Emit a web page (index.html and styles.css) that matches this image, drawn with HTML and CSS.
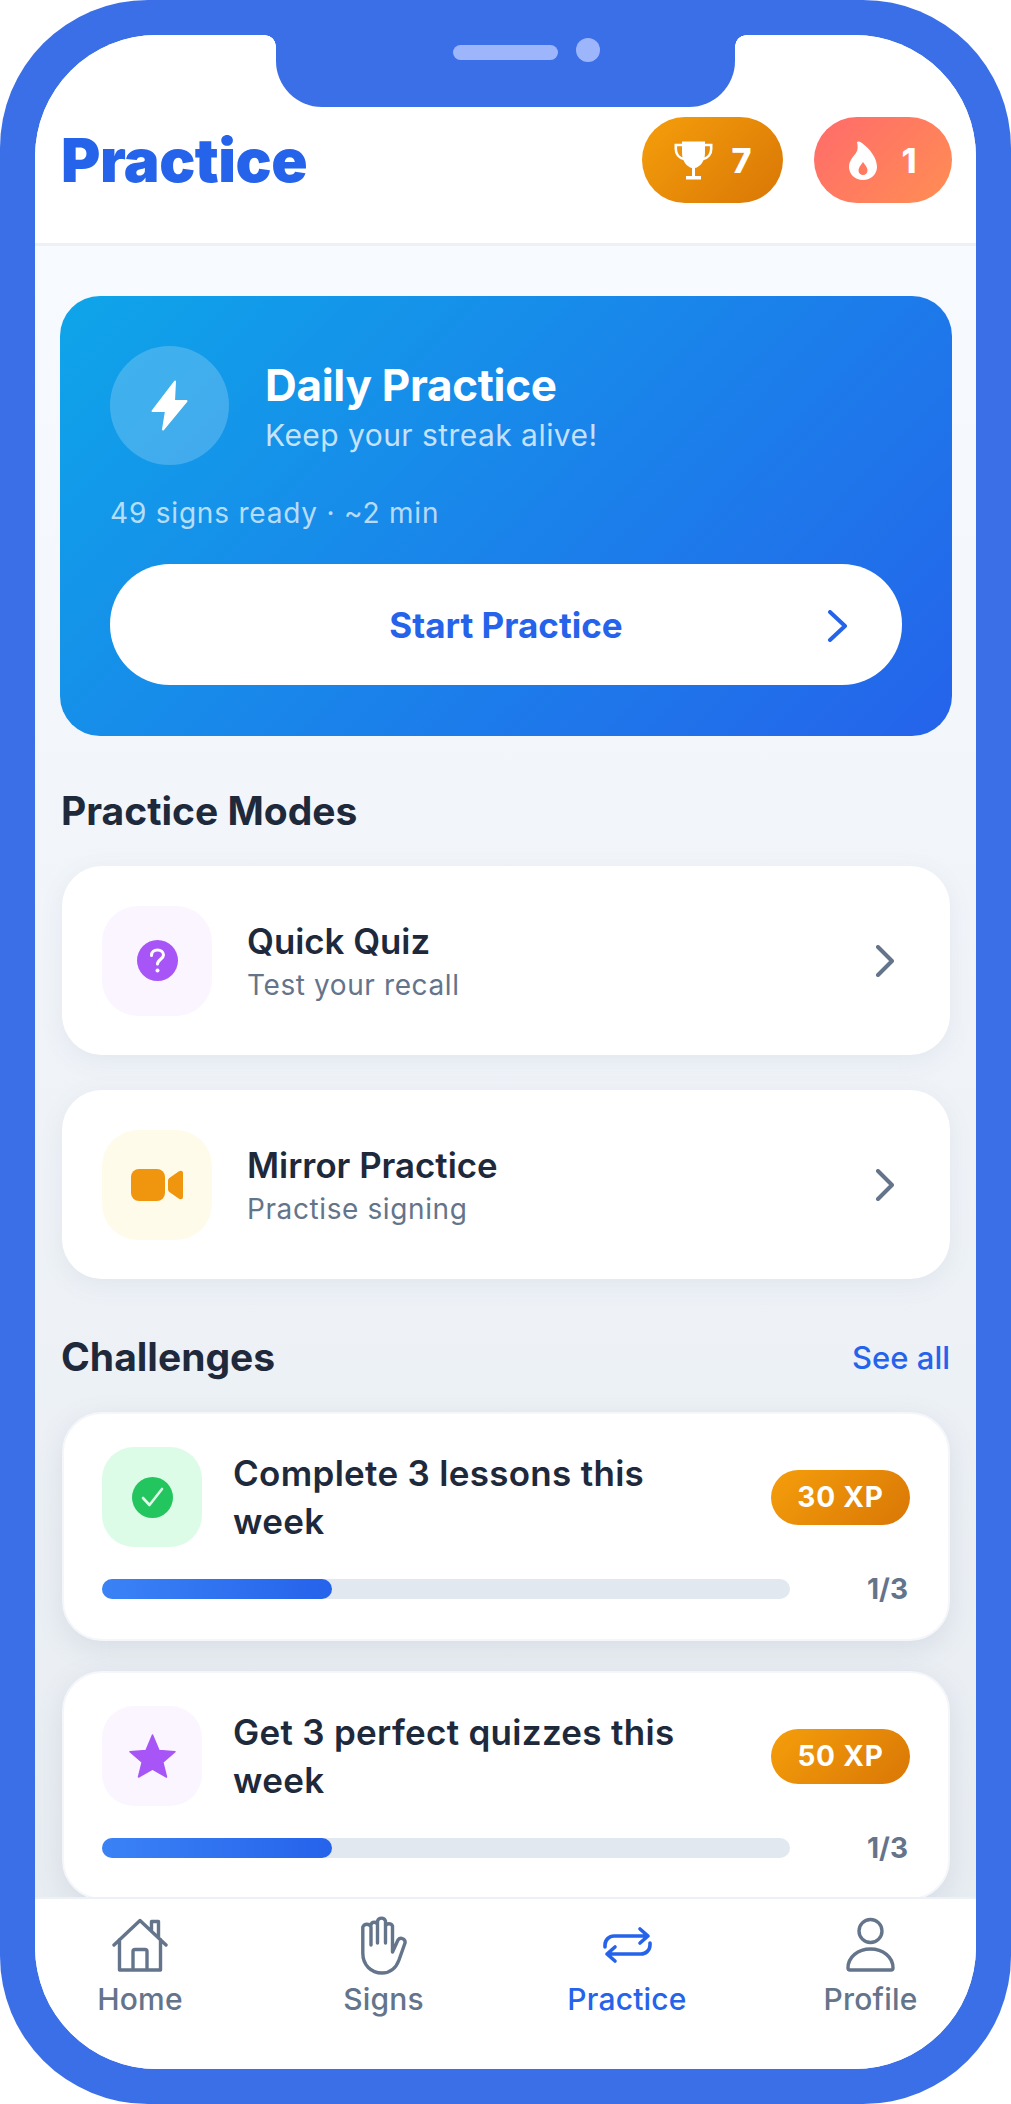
FILE: index.html
```html
<!DOCTYPE html>
<html lang="en">

<head>
    <meta charset="UTF-8" />
    <meta name="viewport" content="width=device-width, initial-scale=1.0" />
    <title>Practice</title>
    <link rel="stylesheet" href="styles.css">
</head>

<body>
    <div class="phone">
        <div class="notch">
            <span class="speaker"></span>
            <span class="camera"></span>
        </div>

        <div class="screen">
            <header class="top-bar">
                <h1 class="page-title">Practice</h1>
                <div class="pills">
                    <div class="pill pill-trophy">
                        <svg class="pill-icon" width="39" height="39" viewBox="0 0 39 39">
                            <path fill="#fff" d="M8 0.5H31V12C31 20 26 26 21 27V35H27V38.5H12V35H18V27C13 26 8 20 8 12Z" />
                            <path fill="none" stroke="#fff" stroke-width="2.6" d="M8 4H1.8V8C1.8 13 5 17 10 18M31 4H37.2V8C37.2 13 34 17 29 18" />
                        </svg>
                        <span>7</span>
                    </div>
                    <div class="pill pill-flame">
                        <svg class="pill-icon" width="28" height="39" viewBox="0 0 28 39">
                            <path fill="#fff" fill-rule="evenodd" d="M8 1C9 0 11 0.5 13 2C21 8 28 17 28 26C28 33 22 39 14 39C6 39 0 33 0 26C0 20 4 16 7 12C9 9 9 5 8 1ZM14 21C11 25 9.5 27 9.5 29.5A4.5 4.5 0 0 0 18.5 29.5C18.5 27 17 25 14 21Z" />
                        </svg>
                        <span>1</span>
                    </div>
                </div>
            </header>

            <main class="content">
                <section class="hero">
                    <div class="hero-top">
                        <div class="hero-icon">
                            <svg width="37" height="51" viewBox="0 0 37 51">
                                <path fill="#fff" stroke="#fff" stroke-width="2" stroke-linejoin="round" d="M24 1.5L1.5 31H15L12 49.5L35.5 21H23Z" />
                            </svg>
                        </div>
                        <div class="hero-text">
                            <div class="hero-title">Daily Practice</div>
                            <div class="hero-sub">Keep your streak alive!</div>
                        </div>
                    </div>
                    <div class="hero-meta">49 signs ready · ~2 min</div>
                    <a class="start-btn" href="#">
                        <span>Start Practice</span>
                        <svg class="start-chevron" width="21" height="32" viewBox="0 0 21 32">
                            <path fill="none" stroke="#2563eb" stroke-width="4" stroke-linecap="round" stroke-linejoin="round" d="M3 2L18 16L3 30" />
                        </svg>
                    </a>
                </section>

                <h2 class="section-title modes-title">Practice Modes</h2>

                <a class="mode-card" href="#">
                    <div class="mode-icon tint-purple">
                        <svg width="41" height="41" viewBox="0 0 41 41">
                            <circle cx="20.5" cy="20.5" r="20.5" fill="#a855f7" />
                            <path fill="none" stroke="#fff" stroke-width="3" stroke-linecap="round" d="M14.5 15.5C14.5 12 17 10 20.5 10C24 10 26.5 12 26.5 15C26.5 19 20.5 19.5 20.5 24" />
                            <circle cx="20.5" cy="30.5" r="2" fill="#fff" />
                        </svg>
                    </div>
                    <div class="mode-text">
                        <div class="mode-name">Quick Quiz</div>
                        <div class="mode-sub">Test your recall</div>
                    </div>
                    <svg class="mode-chevron" width="19" height="32" viewBox="0 0 19 32">
                        <path fill="none" stroke="#64748b" stroke-width="4" stroke-linecap="round" stroke-linejoin="round" d="M3 2L17 16L3 30" />
                    </svg>
                </a>

                <a class="mode-card" href="#">
                    <div class="mode-icon tint-yellow">
                        <svg width="52" height="32" viewBox="0 0 52 32">
                            <rect width="34" height="32" rx="8" fill="#f0960e" />
                            <path fill="#f0960e" d="M37 12C37 10.5 37.6 9.5 39 8.6L48 2.3C50 1 52 2 52 4V28C52 30 50 31 48 29.7L39 23.4C37.6 22.5 37 21.5 37 20Z" />
                        </svg>
                    </div>
                    <div class="mode-text">
                        <div class="mode-name">Mirror Practice</div>
                        <div class="mode-sub">Practise signing</div>
                    </div>
                    <svg class="mode-chevron" width="19" height="32" viewBox="0 0 19 32">
                        <path fill="none" stroke="#64748b" stroke-width="4" stroke-linecap="round" stroke-linejoin="round" d="M3 2L17 16L3 30" />
                    </svg>
                </a>

                <div class="section-row">
                    <h2 class="section-title">Challenges</h2>
                    <a class="see-all" href="#">See all</a>
                </div>

                <div class="challenge">
                    <div class="challenge-top">
                        <div class="challenge-icon tint-green">
                            <svg width="41" height="41" viewBox="0 0 41 41">
                                <circle cx="20.5" cy="20.5" r="20.5" fill="#22c55e" />
                                <path fill="none" stroke="#dcfce7" stroke-width="2.6" stroke-linecap="round" stroke-linejoin="round" d="M11 21L17.5 28L30 12" />
                            </svg>
                        </div>
                        <div class="challenge-name">Complete 3 lessons this week</div>
                        <div class="xp">30 XP</div>
                    </div>
                    <div class="progress-row">
                        <div class="track"><div class="fill" style="width: 33.4%"></div></div>
                        <div class="count">1/3</div>
                    </div>
                </div>

                <div class="challenge">
                    <div class="challenge-top">
                        <div class="challenge-icon tint-purple">
                            <svg width="47" height="44" viewBox="0 0 47 44">
                                <path fill="#a855f7" stroke="#a855f7" stroke-width="1.5" stroke-linejoin="round" d="M23.5 1L30 16.5L46 17.8L33.8 28.2L37.5 43L23.5 35.2L9.5 43L13.2 28.2L1 17.8L17 16.5Z" />
                            </svg>
                        </div>
                        <div class="challenge-name">Get 3 perfect quizzes this week</div>
                        <div class="xp">50 XP</div>
                    </div>
                    <div class="progress-row">
                        <div class="track"><div class="fill" style="width: 33.4%"></div></div>
                        <div class="count">1/3</div>
                    </div>
                </div>
            </main>

            <nav class="tab-bar">
                <a class="tab" href="#">
                    <svg class="tab-icon" width="56" height="54" viewBox="0 0 56 54">
                        <path fill="none" stroke="currentColor" stroke-width="3.4" stroke-linecap="round" stroke-linejoin="round" d="M2 27L28 2.5L54 27M7.5 21.5V52H48.5V21.5M21 52V33.5C21 32.5 21.8 31.5 23 31.5H33C34.2 31.5 35 32.5 35 33.5V52M39.5 12V3.5H46.5V19" />
                    </svg>
                    <span>Home</span>
                </a>
                <a class="tab" href="#">
                    <svg class="tab-icon" width="46" height="60" viewBox="0 0 46 60">
                        <path fill="none" stroke="currentColor" stroke-width="3.4" stroke-linecap="round" stroke-linejoin="round" d="M10 30V12A4.4 4.4 0 0 0 1.8 12V38C1.8 50 10 58 21 58C30 58 35 53 38 45L44 28A3.9 3.9 0 0 0 37 25L31.5 37V11A3.9 3.9 0 0 0 24.5 11V28V6A4.2 4.2 0 0 0 16.5 6V28V10A3.3 3.3 0 0 0 10 10" />
                    </svg>
                    <span>Signs</span>
                </a>
                <a class="tab tab-active" href="#">
                    <svg class="tab-icon swap-icon" width="49" height="36" viewBox="0 0 49 36">
                        <path fill="none" stroke="currentColor" stroke-width="3.6" stroke-linecap="round" stroke-linejoin="round" d="M2 20V18A9 9 0 0 1 11 9H45M37 2L45 9L37 16M47 16V18A9 9 0 0 1 38 27H4M12 20L4 27L12 34" />
                    </svg>
                    <span>Practice</span>
                </a>
                <a class="tab" href="#">
                    <svg class="tab-icon" width="49" height="54" viewBox="0 0 49 54">
                        <circle cx="24.5" cy="13" r="11.5" fill="none" stroke="currentColor" stroke-width="3.4" />
                        <path fill="none" stroke="currentColor" stroke-width="3.4" stroke-linejoin="round" d="M4 52H45A2 2 0 0 0 47 50C47 39 37 31 24.5 31C12 31 2 39 2 50A2 2 0 0 0 4 52Z" />
                    </svg>
                    <span>Profile</span>
                </a>
            </nav>
        </div>
    </div>
</body>

</html>
```

FILE: styles.css
```css
:root {
    --frame: #3b6fe8;
    --blue: #2563eb;
    --ink: #1e293b;
    --muted: #64748b;
    --line: #e2e8f0;
}

* {
    box-sizing: border-box;
}

html,
body {
    margin: 0;
    background: #fff;
}

body {
    font-family: Inter, "Noto Sans", sans-serif;
    color: var(--ink);
}

a {
    color: inherit;
    text-decoration: none;
}

.phone {
    position: relative;
    width: 1011px;
    height: 2104px;
    padding: 35px;
    border-radius: 148px;
    background: var(--frame);
}

.notch {
    position: absolute;
    top: 35px;
    left: 276px;
    width: 459px;
    height: 72px;
    border-radius: 0 0 46px 46px;
    background: var(--frame);
    z-index: 2;
}

.notch::before,
.notch::after {
    content: "";
    position: absolute;
    top: 0;
    width: 11px;
    height: 11px;
}

.notch::before {
    left: -11px;
    background: radial-gradient(circle at 0 100%, transparent 10.5px, var(--frame) 11px);
}

.notch::after {
    right: -11px;
    background: radial-gradient(circle at 100% 100%, transparent 10.5px, var(--frame) 11px);
}

.speaker {
    position: absolute;
    top: 10px;
    left: 177px;
    width: 105px;
    height: 15px;
    border-radius: 8px;
    background: #9db5fb;
}

.camera {
    position: absolute;
    top: 3px;
    left: 300px;
    width: 24px;
    height: 24px;
    border-radius: 50%;
    background: #9db5fb;
}

.screen {
    display: flex;
    flex-direction: column;
    height: 100%;
    border-radius: 122px;
    background: #fff;
    overflow: hidden;
}

/* header */

.top-bar {
    display: flex;
    align-items: center;
    justify-content: space-between;
    flex: none;
    height: 211px;
    padding: 82px 24px 40px 26px;
    border-bottom: 3px solid #edf1f6;
    background: #fff;
}

.page-title {
    margin: 0;
    font-size: 60px;
    font-weight: 900;
    letter-spacing: -0.5px;
    color: var(--blue);
}

.pills {
    display: flex;
    gap: 31px;
}

.pill {
    display: flex;
    align-items: center;
    justify-content: center;
    gap: 19px;
    height: 86px;
    border-radius: 43px;
    font-size: 34px;
    font-weight: 800;
    color: #fff;
}

.pill-trophy {
    width: 141px;
    background: linear-gradient(135deg, #f59e0b, #d97706);
}

.pill-flame {
    width: 138px;
    gap: 24px;
    background: linear-gradient(135deg, #ff6b6b, #ff8e53);
}

/* scrolling part */

.content {
    flex: 1;
    min-height: 0;
    padding: 50px 24px 0 25px;
    overflow: hidden;
    background: linear-gradient(#f7fafe, #e8edf2);
}

.hero {
    height: 440px;
    padding: 50px;
    border-radius: 40px;
    color: #fff;
    background: linear-gradient(135deg, #0ea5e9, #2563eb);
}

.hero-top {
    display: flex;
    align-items: center;
    gap: 36px;
}

.hero-icon {
    display: flex;
    align-items: center;
    justify-content: center;
    flex: none;
    width: 119px;
    height: 119px;
    border-radius: 50%;
    background: rgba(255, 255, 255, 0.2);
}

.hero-text {
    padding-top: 3px;
}

.hero-title {
    font-size: 44px;
    font-weight: 700;
    line-height: 52px;
    letter-spacing: -0.3px;
}

.hero-sub {
    margin-top: 4px;
    font-size: 30px;
    line-height: 40px;
    letter-spacing: 0.45px;
    color: rgba(255, 255, 255, 0.75);
}

.hero-meta {
    margin-top: 30px;
    font-size: 28px;
    line-height: 36px;
    letter-spacing: 0.8px;
    color: rgba(255, 255, 255, 0.7);
}

.start-btn {
    position: relative;
    display: flex;
    align-items: center;
    justify-content: center;
    height: 121px;
    margin-top: 33px;
    border-radius: 60px;
    font-size: 35px;
    font-weight: 700;
    color: var(--blue);
    background: #fff;
}

.start-chevron {
    position: absolute;
    right: 54px;
    top: 46px;
}

.section-title {
    margin: 0;
    font-size: 39px;
    font-weight: 700;
    line-height: 46px;
    color: var(--ink);
}

.modes-title {
    margin: 52px 0 32px 1px;
}

.mode-card {
    display: flex;
    align-items: center;
    height: 189px;
    margin: 0 2px 35px;
    padding: 0 40px;
    border-radius: 40px;
    background: #fff;
    box-shadow: 0 6px 24px rgba(100, 116, 139, 0.09);
}

.mode-icon {
    display: flex;
    align-items: center;
    justify-content: center;
    flex: none;
    width: 110px;
    height: 110px;
    border-radius: 36px;
}

.tint-purple {
    background: #faf5ff;
}

.tint-yellow {
    background: #fffbeb;
}

.tint-green {
    background: #dcfce7;
}

.mode-text {
    flex: 1;
    margin-left: 35px;
    padding-top: 2px;
}

.mode-name {
    font-size: 34.8px;
    font-weight: 600;
    line-height: 44px;
}

.mode-sub {
    margin-top: 2px;
    font-size: 28px;
    line-height: 40px;
    letter-spacing: 0.6px;
    color: var(--muted);
}

.mode-chevron {
    margin-right: 16px;
}

.section-row {
    display: flex;
    align-items: center;
    justify-content: space-between;
    margin: 55px 2px 32px 1px;
}

.see-all {
    font-size: 31px;
    font-weight: 500;
    color: var(--blue);
}

.challenge {
    height: 229px;
    margin: 0 2px 30px;
    padding: 33px 38px 0;
    border: 2px solid #f4f6fa;
    border-radius: 40px;
    background: #fff;
    box-shadow: 0 8px 28px rgba(100, 116, 139, 0.14);
}

.challenge-top {
    display: flex;
    align-items: center;
    gap: 31px;
}

.challenge-icon {
    display: flex;
    align-items: center;
    justify-content: center;
    flex: none;
    width: 100px;
    height: 100px;
    border-radius: 32px;
}

.challenge-name {
    flex: 1;
    padding-right: 50px;
    font-size: 35px;
    font-weight: 600;
    line-height: 48px;
    letter-spacing: 0.3px;
}

.xp {
    flex: none;
    width: 139px;
    height: 55px;
    border-radius: 28px;
    font-size: 28px;
    font-weight: 700;
    line-height: 55px;
    letter-spacing: 0.8px;
    text-align: center;
    color: #fff;
    background: linear-gradient(135deg, #f59e0b, #d97706);
}

.progress-row {
    display: flex;
    align-items: center;
    justify-content: space-between;
    height: 20px;
    margin-top: 32px;
}

.track {
    width: 688px;
    height: 20px;
    border-radius: 10px;
    background: var(--line);
}

.fill {
    height: 100%;
    border-radius: 10px;
    background: linear-gradient(90deg, #3b82f6, #2563eb);
}

.count {
    margin-right: 2px;
    font-size: 28px;
    font-weight: 700;
    line-height: 20px;
    color: var(--muted);
}

/* bottom tabs */

.tab-bar {
    display: grid;
    grid-template-columns: repeat(4, 152px);
    column-gap: 91.5px;
    flex: none;
    height: 172px;
    padding: 16px 0 0 29px;
    border-top: 2px solid #edf1f6;
    background: #fff;
}

.tab {
    display: flex;
    flex-direction: column;
    align-items: center;
    font-size: 30px;
    font-weight: 500;
    letter-spacing: 0.2px;
    color: var(--muted);
}

.tab-icon {
    display: block;
    height: 60px;
    margin-bottom: 6px;
}

.tab-active {
    color: var(--blue);
}
```
